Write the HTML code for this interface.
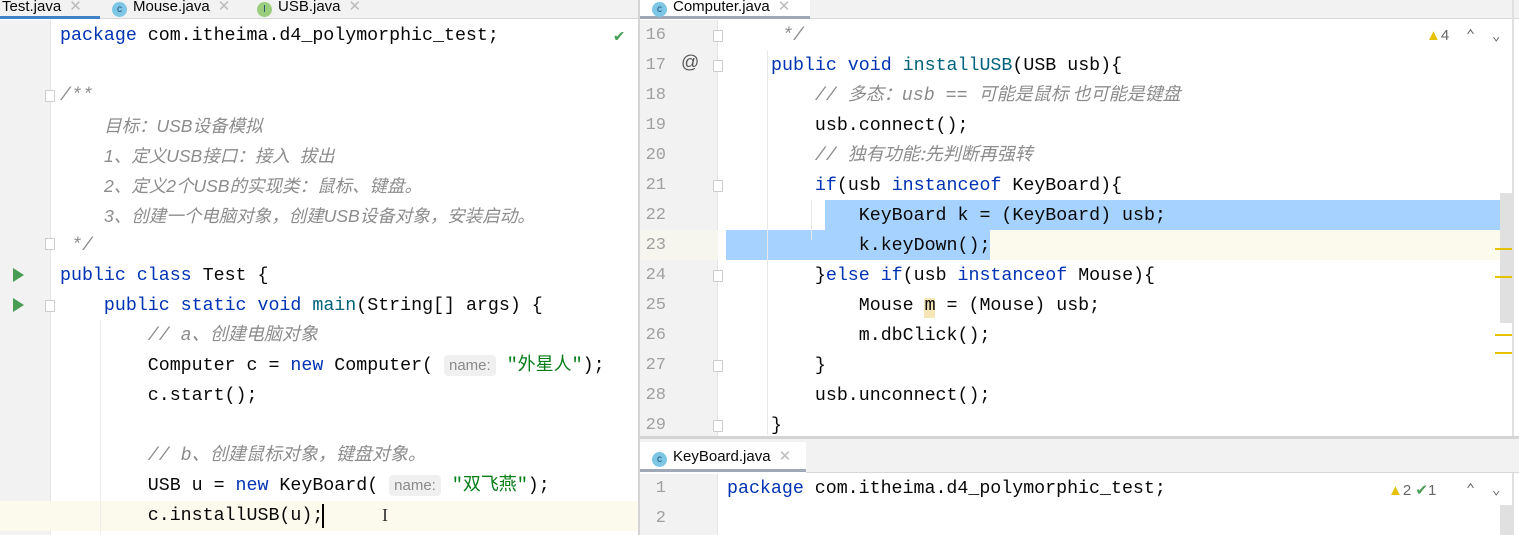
<!DOCTYPE html>
<html><head><meta charset="utf-8"><style>
*{margin:0;padding:0;box-sizing:border-box}
body{width:1519px;height:535px;overflow:hidden;background:#fff;position:relative;font-family:"Liberation Mono","Noto Sans CJK SC",monospace;font-size:18.3px;color:#080808}
.a{position:absolute}
.l{position:absolute;height:30px;line-height:30px;white-space:pre;overflow:visible}
.l *{line-height:0}
.k{color:#0033b3}.c{color:#8c8c8c;font-style:italic}.s{color:#067d17}.m{color:#00627a}
.doc{font-family:"Liberation Sans",sans-serif;font-style:italic;color:#8c8c8c;font-size:17.5px}
.cj{font-family:"Noto Sans CJK SC",sans-serif;font-size:18px}
.n{position:absolute;left:640px;width:26px;text-align:right;color:#a0a0a0;height:30px;line-height:30px;font-size:17px}
.tab{position:absolute;font-family:"Liberation Sans",sans-serif;font-size:15px;height:19px;line-height:14px;white-space:nowrap}
.ic{display:inline-block;width:15px;height:15px;border-radius:50%;background:#7ec6e6;color:#205070;font-size:10px;text-align:center;line-height:15px;vertical-align:-1px;margin-right:6px}
.x{color:#bbb;margin-left:8px}
.hint{background:#f0f0f0;color:#8a8a8a;font-family:"Liberation Sans",sans-serif;font-size:15px;border-radius:4px;padding:2px 5px}
.fold{position:absolute;width:10px;height:12px;border:1px solid #ccc;background:#fff;border-radius:1px}
.play{position:absolute;width:0;height:0;border-left:11px solid #499c54;border-top:7px solid transparent;border-bottom:7px solid transparent}
</style></head><body>
<div class="a" style="left:0;top:0;width:1519px;height:19px;background:#f2f2f2;border-bottom:1px solid #d8d8d8"></div>
<div class="a" style="left:0;top:16px;width:100px;height:3px;background:#4083c9"></div>
<div class="tab" style="left:2px;top:0">Test.java<span class="x">✕</span></div>
<div class="tab" style="left:112px;top:0"><span class="ic">c</span>Mouse.java<span class="x">✕</span></div>
<div class="tab" style="left:257px;top:0"><span class="ic" style="background:#9ccc7e">I</span>USB.java<span class="x">✕</span></div>
<div class="a" style="left:640px;top:0;width:170px;height:19px;background:#fff"></div>
<div class="a" style="left:640px;top:16px;width:170px;height:3px;background:#a0a8b8"></div>
<div class="tab" style="left:652px;top:0"><span class="ic">c</span>Computer.java<span class="x">✕</span></div>
<div class="a" style="left:638px;top:0;width:2px;height:535px;background:#d4d4d4"></div>

<div class="a" style="left:0;top:20px;width:51px;height:515px;background:#f2f2f2;border-right:1px solid #e4e4e4"></div>
<div class="a" style="left:0;top:501px;width:638px;height:30px;background:#fcfaed"></div>
<div class="a" style="left:100px;top:320px;width:1px;height:215px;background:#ececec"></div>
<div class="l" style="left:60px;top:21px"><span class="k">package</span> com.itheima.d4_polymorphic_test;</div>
<div class="a" style="left:614px;top:26px;color:#499c54;font-size:17px">✔</div>
<div class="fold" style="left:45px;top:90px"></div>
<div class="l c" style="left:60px;top:81px">/**</div>
<div class="l doc" style="left:104px;top:111px">目标：USB设备模拟</div>
<div class="l doc" style="left:104px;top:141px">1、定义USB接口：接入  拔出</div>
<div class="l doc" style="left:104px;top:171px">2、定义2个USB的实现类：鼠标、键盘。</div>
<div class="l doc" style="left:104px;top:201px">3、创建一个电脑对象，创建USB设备对象，安装启动。</div>
<div class="fold" style="left:45px;top:238px"></div>
<div class="l c" style="left:60px;top:231px"> */</div>
<div class="play" style="left:13px;top:268px"></div>
<div class="play" style="left:13px;top:298px"></div>
<div class="fold" style="left:45px;top:300px"></div>
<div class="l" style="left:60px;top:261px"><span class="k">public class</span> Test {</div>
<div class="l" style="left:60px;top:291px">    <span class="k">public static void</span> <span class="m">main</span>(String[] args) {</div>
<div class="l c" style="left:60px;top:321px">        // a、<span class="cj">创建电脑对象</span></div>
<div class="l" style="left:60px;top:351px">        Computer c = <span class="k">new</span> Computer( <span class="hint">name:</span> <span class="s">"<span class="cj">外星人</span>"</span>);</div>
<div class="l" style="left:60px;top:381px">        c.start();</div>
<div class="l c" style="left:60px;top:441px">        // b、<span class="cj">创建鼠标对象，键盘对象。</span></div>
<div class="l" style="left:60px;top:471px">        USB u = <span class="k">new</span> KeyBoard( <span class="hint">name:</span> <span class="s">"<span class="cj">双飞燕</span>"</span>);</div>
<div class="l" style="left:60px;top:501px">        c.installUSB(u);</div>
<div class="a" style="left:322px;top:504px;width:2px;height:24px;background:#000"></div>
<div class="a" style="left:382px;top:505px;font-family:'Liberation Serif',serif;font-size:18px;color:#333">I</div>

<div class="a" style="left:640px;top:20px;width:78px;height:416px;background:#f2f2f2;border-right:1px solid #e4e4e4"></div>
<div class="a" style="left:640px;top:230px;width:78px;height:30px;background:#f6f5ee"></div>
<div class="a" style="left:990px;top:230px;width:510px;height:30px;background:#fcfaed"></div>
<div class="a" style="left:825px;top:200px;width:687px;height:30px;background:#a6d2ff"></div>
<div class="a" style="left:726px;top:230px;width:264px;height:30px;background:#a6d2ff"></div>
<div class="a" style="left:767px;top:50px;width:1px;height:385px;background:#e8e8e8"></div>
<div class="a" style="left:811px;top:200px;width:1px;height:40px;background:#e8e8e8"></div>
<div class="n" style="top:21px">16</div><div class="n" style="top:51px">17</div><div class="n" style="top:81px">18</div><div class="n" style="top:111px">19</div><div class="n" style="top:141px">20</div><div class="n" style="top:171px">21</div><div class="n" style="top:201px">22</div><div class="n" style="top:231px">23</div><div class="n" style="top:261px">24</div><div class="n" style="top:291px">25</div><div class="n" style="top:321px">26</div><div class="n" style="top:351px">27</div><div class="n" style="top:381px">28</div><div class="n" style="top:411px">29</div>
<div class="a" style="left:681px;top:52px;font-family:'Liberation Sans',sans-serif;font-size:18px;color:#555">@</div>
<div class="fold" style="left:713px;top:30px"></div><div class="fold" style="left:713px;top:60px"></div><div class="fold" style="left:713px;top:180px"></div><div class="fold" style="left:713px;top:270px"></div><div class="fold" style="left:713px;top:360px"></div><div class="fold" style="left:713px;top:420px"></div>
<div class="l c" style="left:771px;top:21px"> */</div>
<div class="l" style="left:771px;top:51px"><span class="k">public void</span> <span class="m">installUSB</span>(USB usb){</div>
<div class="l c" style="left:771px;top:81px">    // <span class="cj">多态：</span>usb == <span class="cj">可能是鼠标 也可能是键盘</span></div>
<div class="l" style="left:771px;top:111px">    usb.connect();</div>
<div class="l c" style="left:771px;top:141px">    // <span class="cj">独有功能:先判断再强转</span></div>
<div class="l" style="left:771px;top:171px">    <span class="k">if</span>(usb <span class="k">instanceof</span> KeyBoard){</div>
<div class="l" style="left:771px;top:201px">        KeyBoard k = (KeyBoard) usb;</div>
<div class="l" style="left:771px;top:231px">        k.keyDown();</div>
<div class="l" style="left:771px;top:261px">    }<span class="k">else if</span>(usb <span class="k">instanceof</span> Mouse){</div>
<div class="a" style="left:924px;top:298px;width:11px;height:20px;background:#f5e6b8"></div>
<div class="l" style="left:771px;top:291px">        Mouse m = (Mouse) usb;</div>
<div class="l" style="left:771px;top:321px">        m.dbClick();</div>
<div class="l" style="left:771px;top:351px">    }</div>
<div class="l" style="left:771px;top:381px">    usb.unconnect();</div>
<div class="l" style="left:771px;top:411px">}</div>
<div class="a" style="left:1426px;top:27px;font-family:'Liberation Sans',sans-serif;font-size:15px;color:#666"><span style="color:#e5c100">▲</span>4</div>
<div class="a" style="left:1466px;top:26px;font-size:15px;color:#666">⌃</div>
<div class="a" style="left:1492px;top:28px;font-size:14px;color:#666">⌄</div>
<div class="a" style="left:1500px;top:193px;width:12px;height:130px;background:#e0e0e0"></div>
<div class="a" style="left:1495px;top:248px;width:17px;height:2px;background:#e5c100"></div>
<div class="a" style="left:1495px;top:276px;width:17px;height:2px;background:#e5c100"></div>
<div class="a" style="left:1495px;top:334px;width:17px;height:2px;background:#e5c100"></div>
<div class="a" style="left:1495px;top:352px;width:17px;height:2px;background:#e5c100"></div>
<div class="a" style="left:1512px;top:0;width:2px;height:535px;background:#e0e0e0"></div>

<div class="a" style="left:640px;top:436px;width:879px;height:3px;background:#d4d4d4"></div>
<div class="a" style="left:640px;top:439px;width:879px;height:34px;background:#f2f2f2;border-bottom:1px solid #d8d8d8"></div>
<div class="a" style="left:640px;top:442px;width:166px;height:31px;background:#fff"></div>
<div class="a" style="left:640px;top:469px;width:166px;height:3px;background:#a0a8b8"></div>
<div class="tab" style="left:652px;top:450px"><span class="ic">c</span>KeyBoard.java<span class="x">✕</span></div>
<div class="a" style="left:640px;top:474px;width:78px;height:61px;background:#f2f2f2;border-right:1px solid #e4e4e4"></div>
<div class="n" style="top:474px">1</div><div class="n" style="top:504px">2</div>
<div class="l" style="left:727px;top:474px"><span class="k">package</span> com.itheima.d4_polymorphic_test;</div>
<div class="a" style="left:1388px;top:481px;font-family:'Liberation Sans',sans-serif;font-size:15px;color:#666"><span style="color:#e5c100">▲</span>2 <span style="color:#499c54">✔</span>1</div>
<div class="a" style="left:1466px;top:480px;font-size:15px;color:#666">⌃</div>
<div class="a" style="left:1492px;top:482px;font-size:14px;color:#666">⌄</div>
<div class="a" style="left:1500px;top:505px;width:12px;height:30px;background:#e0e0e0"></div>
</body></html>
